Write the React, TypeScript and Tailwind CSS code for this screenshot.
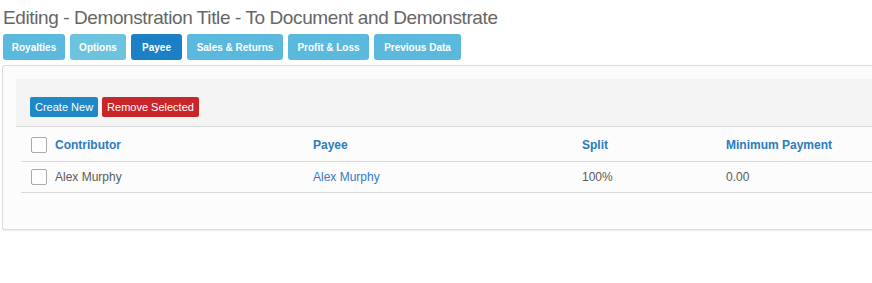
import React from 'react';

const tabs = [
  { label: 'Royalties', cls: 'bg-[#5ab9dc] w-[62px]' },
  { label: 'Options', cls: 'bg-[#6cc3de] w-[56px]' },
  { label: 'Payee', cls: 'bg-[#1b80c5] w-[51px]' },
  { label: 'Sales & Returns', cls: 'bg-[#5ab9dc] w-[96px]' },
  { label: 'Profit & Loss', cls: 'bg-[#5ab9dc] w-[81px]' },
  { label: 'Previous Data', cls: 'bg-[#5ab9dc] w-[87px]' },
];

const rows = [{ contributor: 'Alex Murphy', payee: 'Alex Murphy', split: '100%', min: '0.00' }];

const Checkbox = () => (
  <span className="inline-block w-4 h-4 border border-[#a9a9a9] rounded-[2px] bg-white shrink-0" />
);

export default function App() {
  return (
    <div className="w-[872px] h-[283px] bg-white overflow-hidden font-['Liberation_Sans',Arial,sans-serif]">
      <h1 className="pt-[6px] pl-[3px] text-[19px] tracking-[-0.4px] leading-[24px] text-[#666] font-normal whitespace-nowrap">
        Editing - Demonstration Title - To Document and Demonstrate
      </h1>

      <div className="flex gap-[5px] mt-[4px] pl-[3px]">
        {tabs.map((t) => (
          <button
            key={t.label}
            className={`${t.cls} h-[26px] flex items-center justify-center rounded-[3px] text-white text-[10px] font-bold whitespace-nowrap`}
          >
            {t.label}
          </button>
        ))}
      </div>

      <div className="mt-[5px] ml-[2px] w-[900px] h-[165px] border border-[#dcdcdc] rounded-[3px] bg-[#fcfcfc] shadow-[0_1px_1px_rgba(0,0,0,0.08)] pt-[13px]">
        <div className="ml-[13px] h-[48px] bg-[#f4f4f4] border-b border-[#dadada] pt-[18px] pl-[14px] flex gap-[4px]">
          <button className="h-[20px] px-[5px] rounded-[2px] bg-[#1e88c9] text-white text-[11px] leading-[20px]">
            Create New
          </button>
          <button className="h-[20px] px-[5px] rounded-[2px] bg-[#c9262c] text-white text-[11px] leading-[20px]">
            Remove Selected
          </button>
        </div>

        <div className="ml-[18px]">
          <div className="grid grid-cols-[282px_269px_144px_1fr] h-[35px] pt-[2px] items-center border-b border-[#dadada] text-[12px] font-bold text-[#2b7bbd]">
            <div className="flex items-center gap-[8px] pl-[10px]">
              <Checkbox />
              <span>Contributor</span>
            </div>
            <div className="pl-[10px]">Payee</div>
            <div className="pl-[10px]">Split</div>
            <div className="pl-[10px]">Minimum Payment</div>
          </div>
          {rows.map((r, i) => (
            <div
              key={i}
              className="grid grid-cols-[282px_269px_144px_1fr] h-[31px] items-center border-b border-[#dadada] text-[12px] text-[#5a5a5a]"
            >
              <div className="flex items-center gap-[8px] pl-[10px]">
                <Checkbox />
                <span>{r.contributor}</span>
              </div>
              <div className="pl-[10px] text-[#3478c4]">{r.payee}</div>
              <div className="pl-[10px]">{r.split}</div>
              <div className="pl-[10px]">{r.min}</div>
            </div>
          ))}
        </div>
      </div>
    </div>
  );
}
